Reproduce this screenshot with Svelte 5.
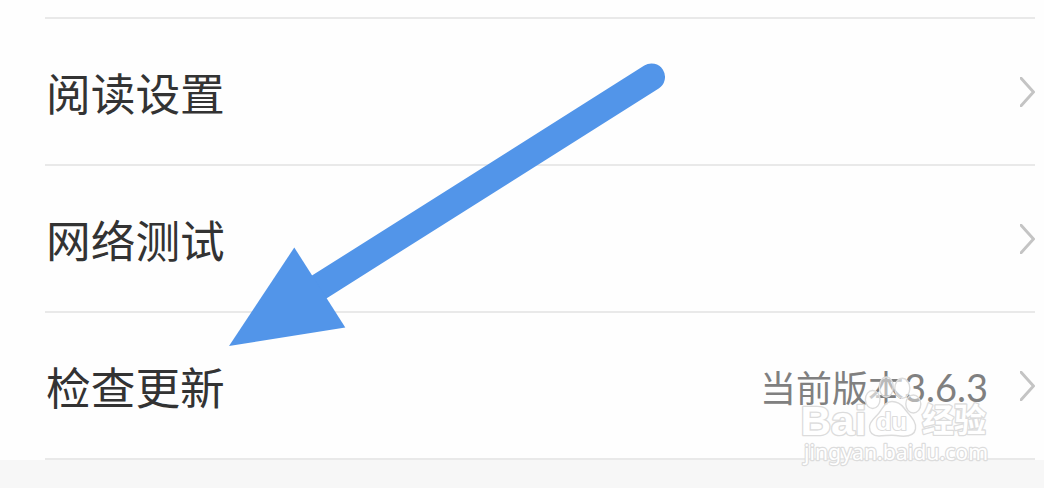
<script>
  const rows = [
    { label: '阅读设置' },
    { label: '网络测试' },
    { label: '检查更新', value: '当前版本', version: '3.6.3' }
  ];
</script>

<main>
  <div class="list">
    {#each rows as row}
      <div class="row">
        <span class="label">{row.label}</span>
        {#if row.value}
          <span class="value">{row.value}<span class="version">{row.version}</span></span>
        {/if}
        <svg class="chevron" width="15" height="30" viewBox="0 0 15 30">
          <path d="M-1 -1L13.5 15L-1 31" fill="none" stroke="#c4c4c4" stroke-width="3" />
        </svg>
      </div>
    {/each}
  </div>

  <svg class="overlay" width="1044" height="488" viewBox="0 0 1044 488">
    <path d="M651.5 77L316 289" stroke="#5295e9" stroke-width="27" stroke-linecap="round" />
    <path d="M229 346L294.3 247.5L345.3 327.5Z" fill="#5295e9" />

    <g fill="#fff" fill-opacity=".6" stroke="#dcdcdc" stroke-width="1.4" stroke-linejoin="round">
      <ellipse cx="872.7" cy="399.5" rx="7.3" ry="9" />
      <ellipse cx="886.3" cy="387" rx="7" ry="10" fill-opacity=".45" />
      <ellipse cx="902.3" cy="388.3" rx="7.5" ry="10" />
      <ellipse cx="913.3" cy="404" rx="7.5" ry="9" fill-opacity=".4" />
      <path fill-opacity=".85" d="M892 401.500C885 401.500 883 408 879 413C875 418 869.500 421 869.500 427C869.500 433 873 436 879 436C885 436 890 434.500 896 435.500C905 437 914 437 915.500 429C917 421 909 415 904 408C901 404 898 401.500 892 401.500Z" />
    </g>
    <g class="mark" fill="#fff" stroke="#dcdcdc" stroke-linejoin="round">
      <text class="latin" x="800.500" y="434.500" font-size="41" stroke-width="2.600" textLength="66" lengthAdjust="spacingAndGlyphs">Bai</text>
      <text class="latin" x="876" y="430" font-size="23" stroke-width="2" textLength="31" lengthAdjust="spacingAndGlyphs">du</text>
      <text class="han" x="922" y="432" font-size="33" stroke-width="2.6" textLength="64" lengthAdjust="spacingAndGlyphs">经验</text>
      <text class="site" x="804" y="459.500" font-size="21.5" stroke-width="2.4" textLength="184" lengthAdjust="spacingAndGlyphs">jingyan.baidu.com</text>
    </g>
  </svg>
</main>

<style>
  :global(body) { margin: 0; background: #f7f7f7; }
  main { position: relative; height: 488px; overflow: hidden; background: #f7f7f7; }
  .list { height: 460px; box-sizing: border-box; padding: 17px 9px 0 45px; background: #fefefe; }
  .list::before { content: ''; display: block; height: 2px; background: #e9e9e9; }
  .row {
    display: flex;
    align-items: center;
    height: 147px;
    box-sizing: border-box;
    border-bottom: 2px solid #e9e9e9;
    font-family: "Noto Sans CJK SC", sans-serif;
  }
  .label { flex: 1; font-size: 44.7px; line-height: 60px; color: #333; padding: 1px 0 0 1px; }
  .value { font-size: 36px; line-height: 50px; color: #808080; margin-right: 32px; padding-top: 2px; white-space: nowrap; }
  .version { font-family: Lato, sans-serif; font-size: 38px; }
  .chevron { display: block; margin-top: 1px; }
  .overlay { position: absolute; inset: 0; pointer-events: none; }
  .mark { paint-order: stroke; }
  .latin { font-family: "Liberation Sans", sans-serif; font-weight: 700; }
  .han { font-family: "Noto Sans CJK SC", sans-serif; font-weight: 700; }
  .site { font-family: "Noto Sans", sans-serif; font-weight: 400; }
</style>
